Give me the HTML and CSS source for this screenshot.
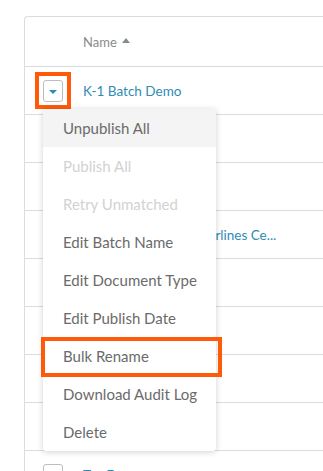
FILE: index.html
```html
<!DOCTYPE html>
<html lang="en">
  <head>
    <meta charset="UTF-8" />
    <meta name="viewport" content="width=device-width, initial-scale=1.0" />
    <title>Batches</title>
    <link rel="stylesheet" href="styles.css">
  </head>
  <body>
    <div class="table">
      <div class="row row--head">
        <div class="cell cell--check"></div>
        <div class="cell cell--name">Name <span class="sort"></span></div>
      </div>
      <div class="row">
        <div class="cell cell--check">
          <div class="actions">
            <button class="toggle"><span class="toggle__caret"></span></button>
            <span class="mark mark--toggle"></span>
            <ul class="menu">
              <li class="menu__item menu__item--hover">Unpublish All</li>
              <li class="menu__item menu__item--off">Publish All</li>
              <li class="menu__item menu__item--off">Retry Unmatched</li>
              <li class="menu__item">Edit Batch Name</li>
              <li class="menu__item">Edit Document Type</li>
              <li class="menu__item">Edit Publish Date</li>
              <li class="menu__item">Bulk Rename<span class="mark mark--item"></span></li>
              <li class="menu__item">Download Audit Log</li>
              <li class="menu__item">Delete</li>
            </ul>
          </div>
        </div>
        <div class="cell cell--name"><a class="link" href="#">K-1 Batch Demo</a></div>
      </div>
      <div class="row">
        <div class="cell cell--check"><span class="box"></span></div>
        <div class="cell cell--name"><a class="link" href="#">W-2 Batch</a></div>
      </div>
      <div class="row">
        <div class="cell cell--check"><span class="box"></span></div>
        <div class="cell cell--name"><a class="link" href="#">1099 Batch</a></div>
      </div>
      <div class="row">
        <div class="cell cell--check"><span class="box"></span></div>
        <div class="cell cell--name"><a class="link" href="#">Southwest Regional Airlines Ce...</a></div>
      </div>
      <div class="row">
        <div class="cell cell--check"><span class="box"></span></div>
        <div class="cell cell--name"><a class="link" href="#">Test Batch</a></div>
      </div>
      <div class="row">
        <div class="cell cell--check"><span class="box"></span></div>
        <div class="cell cell--name"><a class="link" href="#">Q3 Statements</a></div>
      </div>
      <div class="row">
        <div class="cell cell--check"><span class="box"></span></div>
        <div class="cell cell--name"><a class="link" href="#">Invoices</a></div>
      </div>
      <div class="row">
        <div class="cell cell--check"><span class="box"></span></div>
        <div class="cell cell--name"><a class="link" href="#">K-1 Batch</a></div>
      </div>
      <div class="row">
        <div class="cell cell--check"><span class="box"></span></div>
        <div class="cell cell--name"><a class="link" href="#">Tax Forms</a></div>
      </div>
      <div class="row">
        <div class="cell cell--check"><span class="box"></span></div>
        <div class="cell cell--name"><a class="link" href="#">Audit Batch</a></div>
      </div>
    </div>
  </body>
</html>
```

FILE: styles.css
```css
* {
  box-sizing: border-box;
}

html,
body {
  height: 471px;
  overflow: hidden;
}

body {
  margin: 0;
  padding: 16px 0 0 24px;
  background: #fff;
  font-family: Lato, 'Noto Sans', sans-serif;
}

.table {
  border-left: 1px solid #dcdcdc;
  border-top: 1px solid #dcdcdc;
  border-top-left-radius: 4px;
}

.row {
  display: flex;
  align-items: center;
  height: 48px;
  border-bottom: 1px solid #dcdcdc;
}

.row--head {
  height: 50px;
  border-bottom-color: #d3dce2;
}

.cell--check {
  width: 58px;
  padding-left: 18px;
  flex-shrink: 0;
}

.cell--name {
  font-size: 13.5px;
  white-space: nowrap;
}

.row--head .cell--name {
  font-size: 13px;
  color: #8a8a8a;
  display: flex;
  align-items: center;
  gap: 5px;
}

.sort {
  width: 0;
  height: 0;
  border-left: 4px solid transparent;
  border-right: 4px solid transparent;
  border-bottom: 5px solid #8a8a8a;
  margin-top: -2px;
}

.link {
  color: #2f8cb5;
  text-decoration: none;
}

.box {
  display: block;
  width: 20px;
  height: 22px;
  border: 1px solid #bdbdbd;
  border-radius: 3px;
}

.actions {
  position: relative;
  width: 20px;
  height: 22px;
}

.toggle {
  display: flex;
  align-items: center;
  justify-content: center;
  width: 20px;
  height: 22px;
  padding: 0;
  background: #fff;
  border: 1px solid #bdbdbd;
  border-radius: 3px;
}

.toggle__caret {
  width: 0;
  height: 0;
  border-left: 4px solid transparent;
  border-right: 4px solid transparent;
  border-top: 4px solid #2f8cb5;
  margin-top: 2px;
}

.mark {
  position: absolute;
  border: 4px solid #ff5a0a;
  pointer-events: none;
}

.mark--toggle {
  left: -8px;
  top: -8px;
  width: 36px;
  height: 37px;
}

.menu {
  position: absolute;
  top: 29px;
  left: 0;
  z-index: 2;
  width: 173px;
  margin: 0;
  padding: 0;
  list-style: none;
  background: #fff;
  border-radius: 3px;
  box-shadow: 0 1px 6px rgba(0, 0, 0, 0.18);
}

.menu__item {
  position: relative;
  height: 38px;
  padding-left: 20px;
  display: flex;
  align-items: center;
  font-size: 15px;
  color: #6b6b6b;
  white-space: nowrap;
}

.menu__item--hover {
  background: #f4f4f4;
}

.menu__item--off {
  color: #d2d2d2;
}

.mark--item {
  left: -2px;
  top: 0;
  width: 181px;
  height: 40px;
}
```
